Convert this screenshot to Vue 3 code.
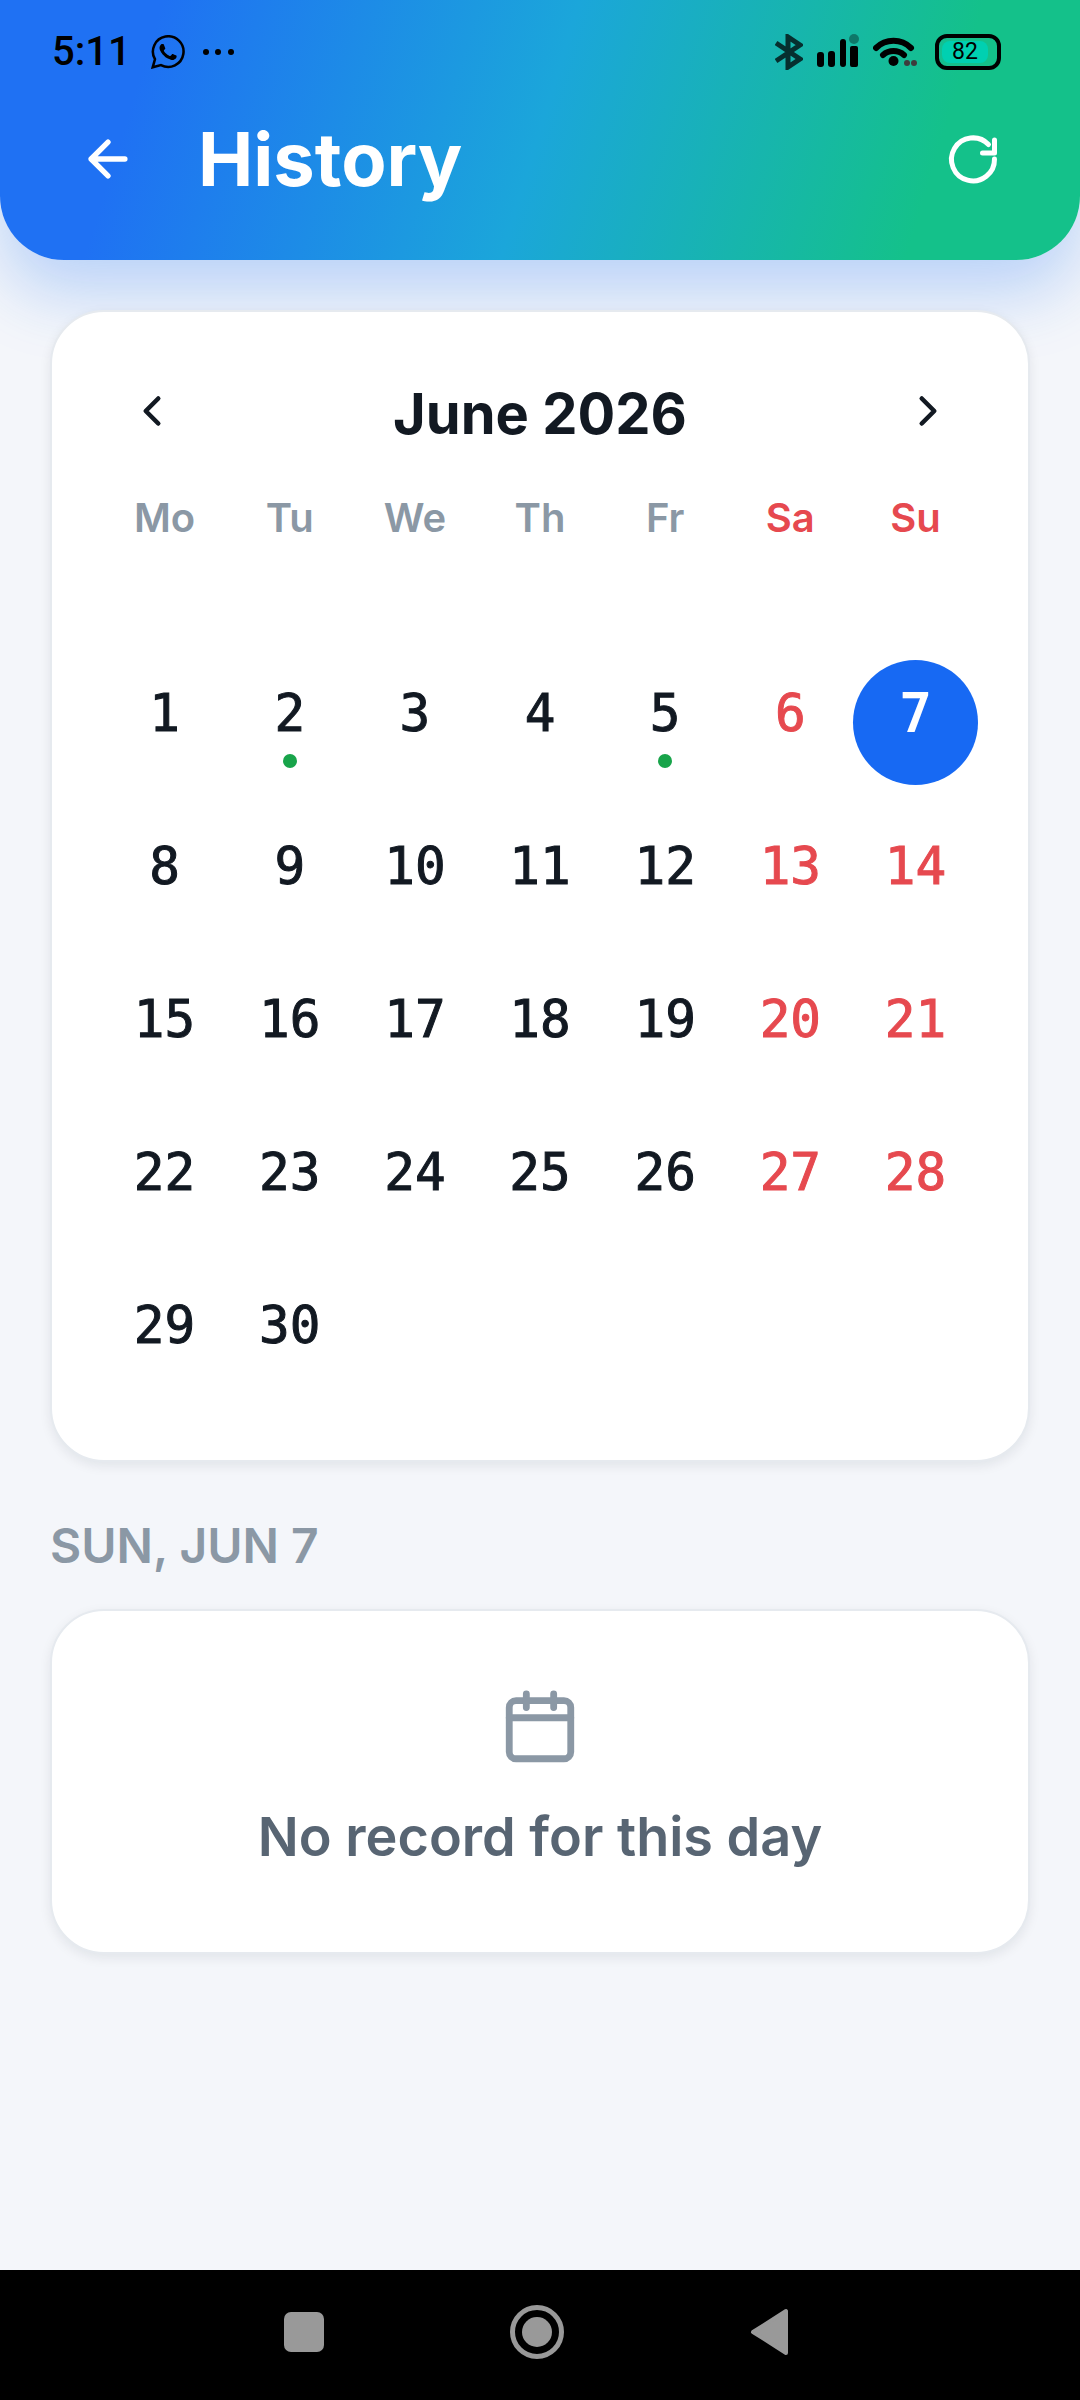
<script setup>
import { ref } from 'vue';

const battery = ref(82);
const selected = ref(7);
const weekdays = ['Mo', 'Tu', 'We', 'Th', 'Fr', 'Sa', 'Su'];
const weekdayNames = ['Mon', 'Tue', 'Wed', 'Thu', 'Fri', 'Sat', 'Sun'];
const recordDays = [2, 5];

// June 2026 starts on a Monday, so no leading blanks are needed
const days = Array.from({ length: 30 }, (_, i) => ({
  num: i + 1,
  weekend: i % 7 > 4,
  hasRecord: recordDays.includes(i + 1),
}));

const selectDay = (num) => {
  selected.value = num;
};

const dayLabel = (num) => `${weekdayNames[(num - 1) % 7]}, Jun ${num}`;
</script>

<template>
  <div class="page">
    <header class="header">
      <div class="status">
        <span class="time">5:11</span>
        <svg class="whatsapp" width="34" height="34" viewBox="0 0 24 24">
          <path d="M17.47 14.38c-.3-.15-1.76-.87-2.03-.97-.27-.1-.47-.15-.67.15-.2.3-.77.97-.94 1.16-.17.2-.35.22-.64.08-.3-.15-1.26-.46-2.39-1.48-.88-.79-1.48-1.76-1.65-2.06-.17-.3-.02-.46.13-.6.13-.14.3-.35.45-.53.15-.17.2-.3.3-.5.1-.2.05-.37-.03-.52-.07-.15-.67-1.61-.91-2.21-.24-.58-.49-.5-.67-.51h-.57c-.2 0-.52.07-.8.37-.27.3-1.04 1.02-1.04 2.48s1.07 2.88 1.21 3.08c.15.2 2.1 3.2 5.08 4.49.71.3 1.26.49 1.7.63.71.22 1.36.19 1.87.12.57-.09 1.76-.72 2.01-1.42.25-.7.25-1.29.17-1.41-.07-.13-.27-.2-.57-.35z" />
          <path d="M1.2 22.8l1.6-5.7A10.8 10.8 0 1 1 7 21.2z" fill="none" stroke="#000" stroke-width="1.8" />
        </svg>
        <svg class="more" width="32" height="8" viewBox="0 0 32 8">
          <circle cx="4" cy="4" r="3" />
          <circle cx="16" cy="4" r="3" />
          <circle cx="29" cy="4" r="3" />
        </svg>

        <div class="system">
          <svg width="28" height="36" viewBox="0 0 28 36">
            <path d="M1 9l24 16-12 8V3l12 8L1 27" fill="none" stroke="#062f2f" stroke-width="5" />
          </svg>
          <svg width="42" height="36" viewBox="0 0 42 36">
            <rect x="0" y="18" width="7" height="15" rx="3" />
            <rect x="11" y="17" width="7" height="16" rx="3" />
            <rect x="23" y="5" width="6" height="28" rx="3" />
            <rect x="33" y="12" width="8" height="21" rx="2" />
            <circle cx="37" cy="5" r="5" opacity="0.35" />
          </svg>
          <svg width="44" height="36" viewBox="0 0 44 36">
            <path d="M3 14a25 25 0 0 1 35 0" fill="none" stroke="#000" stroke-width="6" stroke-linecap="round" />
            <path d="M10 21a16 16 0 0 1 21 0" fill="none" stroke="#000" stroke-width="6" stroke-linecap="round" />
            <circle cx="20.500" cy="27" r="5" />
            <circle cx="34" cy="29" r="3" fill="#3d3d3d" />
            <circle cx="41" cy="29" r="3" fill="#3d3d3d" />
          </svg>
          <div class="battery">
            <span class="level" :style="{ width: battery + '%' }">{{ battery }}</span>
          </div>
        </div>
      </div>

      <div class="title-row">
        <button type="button" class="icon-btn" aria-label="Back">
          <svg width="58" height="58" viewBox="0 0 24 24">
            <path d="M19 12H5M12 19l-7-7 7-7" />
          </svg>
        </button>
        <h1>History</h1>
        <button type="button" class="icon-btn" aria-label="Refresh">
          <svg width="58" height="58" viewBox="0 0 58 58">
            <path class="refresh" d="M50.500 29A21.500 21.500 0 1 1 44.500 14.500M50.500 10v13h-12" />
          </svg>
        </button>
      </div>
    </header>

    <main class="content">
      <section class="card calendar">
        <div class="month-row">
          <button type="button" class="month-btn" aria-label="Previous month">
            <svg width="50" height="50" viewBox="0 0 24 24"><path d="M15 18l-6-6 6-6" /></svg>
          </button>
          <h2>June 2026</h2>
          <button type="button" class="month-btn" aria-label="Next month">
            <svg width="50" height="50" viewBox="0 0 24 24"><path d="M9 18l6-6-6-6" /></svg>
          </button>
        </div>

        <div class="weekdays">
          <span v-for="(day, i) in weekdays" :key="day" :class="{ weekend: i > 4 }">{{ day }}</span>
        </div>

        <div class="days">
          <button
            v-for="day in days"
            :key="day.num"
            type="button"
            class="day"
            :class="{ weekend: day.weekend, selected: day.num === selected }"
            @click="selectDay(day.num)"
          >
            <span class="num">{{ day.num }}</span>
            <span class="dot" :class="{ on: day.hasRecord }"></span>
          </button>
        </div>
      </section>

      <h3>{{ dayLabel(selected) }}</h3>

      <section class="card empty">
        <svg width="82" height="82" viewBox="0 0 24 24">
          <rect x="3" y="4" width="18" height="17" rx="2" />
          <path d="M8 2v4M16 2v4M3 9h18" />
        </svg>
        <p>No record for this day</p>
      </section>
    </main>

    <nav class="navbar">
      <button type="button" aria-label="Recent apps">
        <svg width="54" height="54" viewBox="0 0 54 54"><rect x="7" y="7" width="40" height="40" rx="7" /></svg>
      </button>
      <button type="button" aria-label="Home">
        <svg width="54" height="54" viewBox="0 0 54 54">
          <circle cx="27" cy="27" r="24.500" fill="none" stroke="#999" stroke-width="5" />
          <circle cx="27" cy="27" r="15" />
        </svg>
      </button>
      <button type="button" aria-label="Back">
        <svg width="54" height="54" viewBox="0 0 54 54">
          <path d="M10 27L43 6v42z" stroke="#999" stroke-width="4" stroke-linejoin="round" />
        </svg>
      </button>
    </nav>
  </div>
</template>

<style>
body {
  margin: 0;
  background: #f4f6fa;
}
</style>

<style scoped>
.page {
  min-height: 100vh;
  display: flex;
  flex-direction: column;
  background: #f4f6fa;
  font-family: Inter, "Liberation Sans", sans-serif;
  color: #121922;
}

button {
  padding: 0;
  border: none;
  background: none;
  color: inherit;
  font: inherit;
  cursor: pointer;
}

svg {
  display: block;
  flex: none;
}

h1, h2, h3, p {
  margin: 0;
}

.header {
  padding-bottom: 47px;
  border-radius: 0 0 64px 64px;
  background: linear-gradient(107deg, #1f71f3 14%, #1ba6da 50%, #14c18a 85%);
  box-shadow: 0 33px 66px rgba(31, 113, 243, 0.27);
}

.status {
  height: 104px;
  padding: 0 79px 0 52px;
  display: flex;
  align-items: center;
  color: #000;
}

.time {
  font: 500 40px/48px Roboto, sans-serif;
}

.whatsapp {
  margin-left: 20px;
}

.more {
  margin-left: 17px;
}

.system {
  margin-left: auto;
  display: flex;
  gap: 14px;
}

.battery {
  width: 66px;
  height: 36px;
  margin-left: 4px;
  padding: 3px 1px;
  box-sizing: border-box;
  border: 4px solid #000;
  border-radius: 12px;
}

.level {
  display: block;
  margin-left: 2px;
  border-radius: 8px;
  background: #00d0b1;
  font: 400 23px/22px Roboto, sans-serif;
  text-align: center;
}

.title-row {
  height: 109px;
  padding: 0 50px;
  display: flex;
  align-items: center;
  color: #fff;
}

.icon-btn {
  width: 115px;
  height: 109px;
  display: flex;
  align-items: center;
  justify-content: center;
}

.icon-btn path,
.month-btn path {
  fill: none;
  stroke: currentColor;
  stroke-width: 2.2;
  stroke-linecap: round;
  stroke-linejoin: round;
}

.icon-btn .refresh {
  stroke-width: 5;
}

h1 {
  flex: 1;
  margin-left: 33px;
  font-size: 74px;
  line-height: 96px;
  font-weight: 700;
}

.content {
  flex: 1;
  padding: 50px;
}

.card {
  border: 2px solid #e6eaef;
  border-radius: 54px;
  background: #fff;
  box-shadow: 0 4px 12px rgba(18, 25, 34, 0.08);
}

.calendar {
  padding: 50px 50px 62px;
}

.month-row {
  height: 104px;
  display: flex;
  justify-content: space-between;
}

.month-btn {
  width: 100px;
  height: 98px;
  display: flex;
  align-items: center;
  justify-content: center;
}

h2 {
  font-size: 56px;
  line-height: 104px;
  font-weight: 700;
}

.weekdays {
  margin-top: 24px;
  display: grid;
  grid-template-columns: repeat(7, 1fr);
  font-size: 40px;
  line-height: 56px;
  font-weight: 600;
  text-align: center;
  color: #8b98a5;
}

.days {
  margin-top: 114px;
  display: grid;
  grid-template-columns: repeat(7, 1fr);
  row-gap: 28px;
}

.day {
  aspect-ratio: 1;
  display: flex;
  flex-direction: column;
  align-items: center;
  justify-content: center;
  gap: 4px;
  border-radius: 50%;
}

.num {
  font-family: "DejaVu Sans Mono", monospace;
  font-size: 51px;
  line-height: 72px;
  -webkit-text-stroke: 1px currentColor;
}

.dot {
  width: 14px;
  height: 14px;
  border-radius: 50%;
}

.dot.on {
  background: #18a44a;
}

.weekend {
  color: #e6494f;
}

.day.selected {
  background: #1769f3;
  color: #fff;
}

.selected .num {
  -webkit-text-stroke: 2px currentColor;
}

h3 {
  margin: 54px 0 33px;
  font-size: 48px;
  line-height: 60px;
  font-weight: 600;
  text-transform: uppercase;
  color: #8b98a5;
}

.empty {
  padding: 76px 50px 79px;
  display: flex;
  flex-direction: column;
  align-items: center;
  gap: 32px;
}

.empty svg {
  fill: none;
  stroke: #8b98a5;
  stroke-width: 2;
  stroke-linecap: round;
  stroke-linejoin: round;
}

.empty p {
  font-size: 54px;
  line-height: 72px;
  font-weight: 600;
  color: #586573;
}

.navbar {
  height: 124px;
  padding: 0 194px 6px 187px;
  display: grid;
  grid-template-columns: repeat(3, 1fr);
  background: #000;
}

.navbar button {
  display: flex;
  align-items: center;
  justify-content: center;
}

.navbar svg {
  fill: #999;
}
</style>
